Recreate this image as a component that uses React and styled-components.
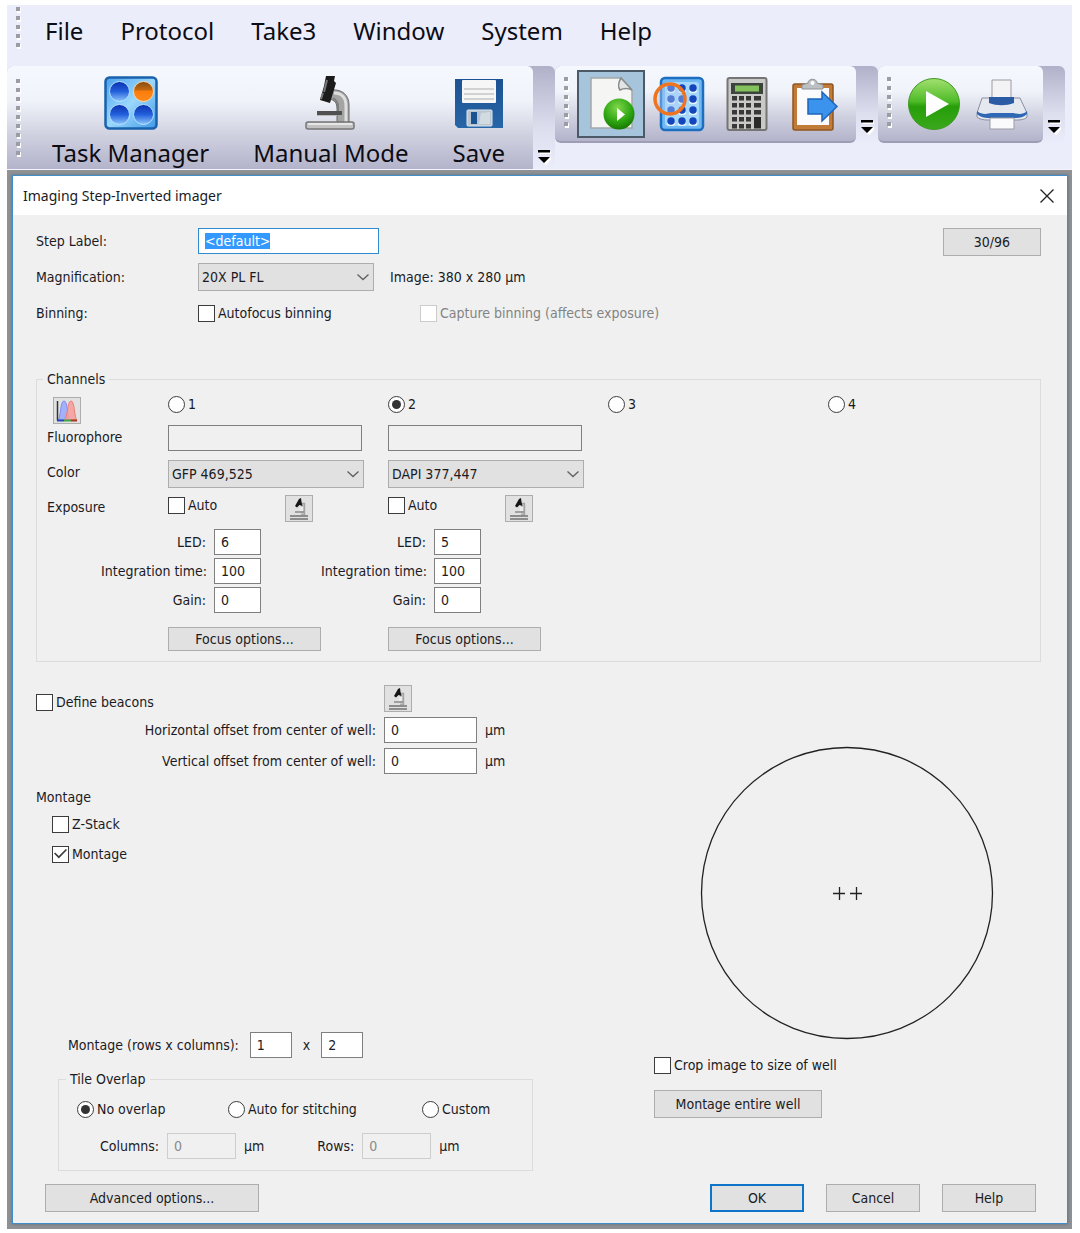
import React, { useEffect, useRef } from "react";
import styled, { createGlobalStyle, css } from "styled-components";

const dialogFont = '"DejaVu Sans Condensed", "DejaVu Sans", sans-serif';
const shellFont = '"Noto Sans", "Open Sans", sans-serif';

const GlobalStyle = createGlobalStyle`
  *, *::before, *::after { box-sizing: border-box; }
  body { margin: 0; background: #fff; }
  button, input, select { font: inherit; color: inherit; margin: 0; border-radius: 0; }
  ::selection { background: #3399ff; color: #fff; }
`;

/* ---------- application shell ---------- */

const Shell = styled.div`
  margin: 5px 8px 4px 7px;
  background: #ebedfb;
  font: 24px/32px ${shellFont};
  color: #0c0c14;
`;

const MenuBar = styled.nav`
  display: flex;
  align-items: center;
  height: 61px;
  padding: 2px 9px 12px;
`;

const MenuList = styled.ul`
  display: flex;
  gap: 37px;
  margin: 0;
  padding: 0 0 0 24px;
  list-style: none;
`;

const MenuLink = styled.a`
  color: inherit;
  text-decoration: none;
`;

const Grip = styled.span`
  flex: none;
  align-self: flex-start;
  width: 5px;
  height: ${(p) => p.$dots * 9}px;
  background: linear-gradient(#9c9ca6 0 4px, transparent 4px) 0 0 / 4px 9px repeat-y,
    linear-gradient(#fff 0 5px, transparent 5px) 1px 1px / 4px 9px repeat-y;
`;

const ToolbarStrip = styled.div`
  display: flex;
  align-items: flex-start;
  height: 103px;
`;

const Group = styled.div`
  display: flex;
  width: ${(p) => p.$width}px;
  height: ${(p) => (p.$tall ? 103 : 77)}px;
  border-radius: 6px;
  background: linear-gradient(#b0b1c9, #dcdeee 60%, #ebedfb);
`;

const Tools = styled.div`
  flex: 1;
  display: flex;
  align-items: flex-start;
  padding: ${(p) => (p.$tall ? "10px 0 0 9px" : "4px 0 0 9px")};
  border-radius: ${(p) => (p.$tall ? "6px 6px 0 0" : "6px")};
  border-bottom: ${(p) => (p.$tall ? 0 : 2)}px solid #9d9db5;
  background: linear-gradient(#f5f8fd 0, #f0f3fa 34%, #cfd0df 68%, #b3b3cb 100%);

  > ${Grip} {
    margin-top: ${(p) => (p.$tall ? 3 : 7)}px;
    margin-right: ${(p) => (p.$tall ? 31 : 8)}px;
  }
`;

const ToolList = styled.div`
  display: flex;
  gap: ${(p) => p.$gap}px;
`;

const BigTool = styled.button`
  display: flex;
  flex-direction: column;
  align-items: center;
  gap: 7px;
  padding: 0;
  border: 0;
  background: none;
  white-space: nowrap;
`;

const IconTool = styled.button`
  display: grid;
  place-items: center;
  width: 68px;
  height: 68px;
  padding: 0;
  border: 2px solid ${(p) => (p.$active ? "#4b5a66" : "transparent")};
  background: ${(p) => (p.$active ? "#a6c4dc" : "none")};
`;

const Overflow = styled.button`
  display: flex;
  align-items: flex-end;
  justify-content: center;
  width: 22px;
  padding: 0 0 ${(p) => (p.$tall ? 4 : 8)}px;
  border: 0;
  background: none;
`;

/* ---------- dialog ---------- */

const Workspace = styled.main`
  padding: 5px 4px 5px 5px;
  border-top: 1px solid #f4f5fc;
  background: #8f9194;
`;

const Dialog = styled.section`
  border: 1px solid #3f8dc9;
  background: #f0f0f0;
  box-shadow: 0 0 3px #5c6f80;
  font: 14px/18px ${dialogFont};
  color: #1b1b1f;
`;

const TitleBar = styled.header`
  display: flex;
  align-items: center;
  justify-content: space-between;
  height: 39px;
  padding: 0 10px;
  background: #fff;
  font-family: ${shellFont};
`;

const Title = styled.h1`
  margin: 0;
  font-size: 14px;
  font-weight: 400;
`;

const CloseButton = styled.button`
  display: grid;
  place-items: center;
  width: 20px;
  height: 20px;
  padding: 0;
  border: 0;
  background: none;
`;

const Body = styled.form`
  display: flex;
  flex-direction: column;
  padding: 13px 26px 11px 23px;
`;

const FormHead = styled.div`
  display: flex;
  justify-content: space-between;
  align-items: flex-start;
`;

const Settings = styled.div`
  display: grid;
  grid-template-columns: 162px 222px auto;
  grid-template-rows: 26px 28px 26px;
  row-gap: 9px;
  align-items: center;
`;

const RowLabel = styled.label`
  grid-column: 1;
`;

const Inline = styled.div`
  grid-column: 2 / span 2;
  display: flex;
  align-items: center;
  gap: 16px;
`;

const TextInput = styled.input`
  width: ${(p) => p.$width}px;
  height: 26px;
  padding: 0 6px;
  border: 1px solid ${(p) => (p.$accent ? "#2f8ad0" : "#7f7f7f")};
  background: ${(p) => (p.$plain ? "#f0f0f0" : "#fff")};
  outline: 0;

  &:disabled {
    border: 1px solid #cdcdcd;
    background: #f0f0f0;
    color: #8a8a8a;
  }
`;

const SelectBox = styled.span`
  display: inline-grid;
  align-items: center;
  width: ${(p) => p.$width}px;
  height: 28px;

  > * {
    grid-area: 1 / 1;
  }
  > svg {
    justify-self: end;
    margin-right: 4px;
    pointer-events: none;
  }
`;

const NativeSelect = styled.select`
  appearance: none;
  width: 100%;
  height: 28px;
  padding: 0 20px 0 3px;
  border: 1px solid #adadad;
  background: #e1e1e1;
`;

const PushButton = styled.button`
  width: ${(p) => p.$width}px;
  height: ${(p) => p.$height || 28}px;
  padding: 0;
  border: ${(p) => (p.$primary ? "2px solid #0f75c8" : "1px solid #adadad")};
  background: #e1e1e1;
  white-space: nowrap;
`;

const GlyphButton = styled.button`
  display: grid;
  place-items: center;
  width: 28px;
  height: 27px;
  padding: 0;
  border: 1px solid #adadad;
  background: #e1e1e1;
`;

const Choice = styled.label`
  display: inline-flex;
  align-items: center;
  gap: 3px;
  height: 20px;
  white-space: nowrap;
  color: ${(p) => (p.$disabled ? "#838383" : "inherit")};
`;

const boxInput = css`
  appearance: none;
  flex: none;
  display: grid;
  place-items: center;
  width: 17px;
  height: 17px;
  border: 1px solid #3c3c3c;
  background: #fff;

  &:disabled {
    border-color: #cccccc;
  }
`;

const Tick = styled.input.attrs({ type: "checkbox" })`
  ${boxInput}

  &:checked::before {
    content: "";
    width: 13px;
    height: 10px;
    background: #3c3c3c;
    clip-path: polygon(0 46%, 9% 36%, 37% 70%, 91% 0, 100% 10%, 37% 94%);
  }
`;

const Dot = styled.input.attrs({ type: "radio" })`
  ${boxInput}
  && {
    border-radius: 50%;
  }

  &:checked::before {
    content: "";
    width: 9px;
    height: 9px;
    border-radius: 50%;
    background: #333;
  }
`;

const FieldSet = styled.fieldset`
  min-width: 0;
  margin: 0;
  padding: 0;
  border: 1px solid #dcdcdc;
`;

const Legend = styled.legend`
  margin-left: ${(p) => p.$indent}px;
  padding: 0 4px;
`;

const ChannelsSet = styled(FieldSet)`
  margin-top: 44px;
  padding: 6px 0 10px 10px;
`;

const ChannelGrid = styled.div`
  display: grid;
  grid-template-columns: 54px repeat(4, 67px 153px);
  grid-template-rows: 31px 35px 35px 34px 98px 24px;
  align-items: start;
`;

const RowHeading = styled.span`
  grid-column: 1 / span 2;
  grid-row: ${(p) => p.$row};
  line-height: 24px;
`;

const SpectrumCell = styled.div`
  grid-area: 1 / 1 / 2 / 3;
  padding: 3px 0 0 6px;
`;

const ChannelCell = styled.div`
  grid-row: ${(p) => p.$row};
  grid-column: ${(p) => 3 + 2 * p.$channel} / span 2;
  display: flex;
  gap: 68px;
`;

const ParamCell = styled.div`
  grid-row: 5;
  grid-column: ${(p) => 2 + 2 * p.$channel} / span 2;
  display: grid;
  grid-template-columns: 105px 47px;
  column-gap: 8px;
  row-gap: 3px;
  align-items: center;
`;

const EndLabel = styled.label`
  width: ${(p) => (p.$width ? `${p.$width}px` : "auto")};
  text-align: right;
  white-space: nowrap;
`;

const Lower = styled.div`
  display: grid;
  grid-template-columns: 618px 1fr;
  align-items: start;
  margin-top: 23px;
`;

const Beacons = styled.div`
  display: grid;
  grid-template-columns: 340px 93px auto;
  gap: 5px 8px;
  align-items: center;

  > ${Choice} {
    align-self: end;
  }
`;

const MontageList = styled.div`
  display: flex;
  flex-direction: column;
  align-items: flex-start;
  gap: 10px;
  margin-top: 14px;
  padding-left: 16px;
`;

const SubHeading = styled.h2`
  margin: 0 0 -2px -16px;
  font-size: 14px;
  font-weight: 400;
`;

const TileRow = styled.div`
  display: flex;
  align-items: center;
  gap: 11px;
  margin: 168px 0 12px;
  padding-left: 32px;
`;

const TileSet = styled(FieldSet)`
  width: 475px;
  margin-left: 22px;
  padding: 11px 18px 11px;
`;

const TileChoices = styled.div`
  display: grid;
  grid-template-columns: 151px 194px auto;
  margin-bottom: 14px;
`;

const TileFields = styled.div`
  display: flex;
  align-items: center;
  gap: 8px;
`;

const WellPane = styled.div`
  display: flex;
  flex-direction: column;
  align-items: flex-start;
  gap: 15px;
  padding-top: 61px;
`;

const WellMap = styled.svg`
  display: block;
  margin-left: 46px;
`;

const Footer = styled.footer`
  display: flex;
  justify-content: space-between;
  margin-top: 13px;
  padding: 0 5px 0 9px;
`;

const Actions = styled.div`
  display: flex;
  gap: 22px;
`;

/* ---------- drawings ---------- */

const PlateIcon = () => (
  <svg width="54" height="54" viewBox="0 0 54 54" aria-hidden="true">
    <defs>
      <linearGradient id="plate" x1="0" y1="0" x2="1" y2="1">
        <stop offset="0" stopColor="#4aa0ec" />
        <stop offset=".5" stopColor="#9ad8fd" />
        <stop offset="1" stopColor="#3e97e6" />
      </linearGradient>
      <linearGradient id="well" x1="0" y1="0" x2="0" y2="1">
        <stop offset="0" stopColor="#0a2fae" />
        <stop offset=".5" stopColor="#2360dc" />
        <stop offset="1" stopColor="#8ec6fb" />
      </linearGradient>
      <linearGradient id="wellHot" x1="0" y1="0" x2="0" y2="1">
        <stop offset="0" stopColor="#7d4c14" />
        <stop offset=".4" stopColor="#c1660f" />
        <stop offset=".5" stopColor="#fb7d0c" />
        <stop offset="1" stopColor="#ff8a1c" />
      </linearGradient>
    </defs>
    <rect x="1.5" y="1.5" width="51" height="51" rx="4" fill="url(#plate)" stroke="#1a61ac" strokeWidth="2.5" />
    <circle cx="15.5" cy="15.5" r="10" fill="url(#well)" stroke="#b7e2ff" />
    <circle cx="39.5" cy="15.5" r="10" fill="url(#wellHot)" stroke="#ffd7a8" />
    <circle cx="15.5" cy="38.5" r="10" fill="url(#well)" stroke="#b7e2ff" />
    <circle cx="39.5" cy="38.5" r="10" fill="url(#well)" stroke="#b7e2ff" />
  </svg>
);

const MicroscopeIcon = () => (
  <svg width="54" height="54" viewBox="0 0 54 54" aria-hidden="true">
    <path d="M28 14c10-1 17 5 17 15v17H33V33c0-6-2-9-8-10z" fill="#a4a4a4" stroke="#6a6a6a" />
    <path d="M30 17c8 0 12 5 12 13v16" fill="none" stroke="#dedede" strokeWidth="3" />
    <path d="M34 36V30c0-4-2-6-5-8" fill="none" stroke="#7d7d7d" strokeWidth="2" />
    <path d="M22 0h9l-1 5 2 2-6 20-10-3 4-14z" fill="#1b1b1b" />
    <path d="M23 4l-3 12M19 17l-2 6" stroke="#777" strokeWidth="2" />
    <rect x="13" y="35" width="25" height="4" fill="#505050" />
    <rect x="13" y="39" width="20" height="1" fill="#b9b9b9" />
    <rect x="2" y="46" width="48" height="7" rx="2" fill="#c2c2c2" stroke="#777" strokeWidth="1.5" />
    <path d="M4 48h44" stroke="#f2f2f2" strokeWidth="1.5" />
  </svg>
);

const SmallMicroscopeIcon = () => (
  <svg width="20" height="22" viewBox="0 0 20 22" aria-hidden="true">
    <path d="M12 5.500h3.500V17H12" fill="#c6c6c6" stroke="#a2a2a2" strokeWidth="1.400" />
    <path d="M11 9h3v4h-3z" fill="#ededed" />
    <path d="M6 14h9" stroke="#8a8a8a" strokeWidth="1.500" />
    <path d="M1 18h18M1 21h18" stroke="#8d8d8d" strokeWidth="1.800" />
    <path d="M10 1l2-1 .5 4 1 4-3-1L8 9.500 6 8z" fill="#161616" />
  </svg>
);

const SaveIcon = () => (
  <svg width="48" height="54" viewBox="0 0 48 54" aria-hidden="true">
    <defs>
      <linearGradient id="disk" x1="0" y1="0" x2="0" y2="1">
        <stop offset="0" stopColor="#1d5292" />
        <stop offset="1" stopColor="#2766a8" />
      </linearGradient>
    </defs>
    <path d="M0 3h48v49H3l-3-3z" fill="url(#disk)" />
    <rect x="7" y="4" width="34" height="23" rx="1" fill="#f6f6f6" />
    <path d="M9 13h30M9 18h30M9 23h30" stroke="#c6c6c6" strokeWidth="1.5" />
    <rect x="12" y="34" width="25" height="16" rx="1" fill="#b9c6d2" stroke="#dfe7ee" />
    <rect x="16" y="36" width="6" height="12" fill="#1c5292" />
    <path d="M26 37l9-1v12H24z" fill="#d2dbe2" />
  </svg>
);

const PageRunIcon = () => (
  <svg width="50" height="56" viewBox="0 0 50 56" aria-hidden="true">
    <defs>
      <radialGradient id="goSmall" cx=".45" cy=".3" r=".75">
        <stop offset="0" stopColor="#7fd84b" />
        <stop offset=".6" stopColor="#2ea512" />
        <stop offset="1" stopColor="#147000" />
      </radialGradient>
    </defs>
    <path d="M5 2h30l11 12v38H5z" fill="#f5f5f3" stroke="#a3a8a8" strokeWidth="1.500" />
    <path d="M35 2c-3 5-3 9-1 12 4-2 8-2 12 0z" fill="#e2e5e5" stroke="#868c8c" strokeWidth="1.500" />
    <circle cx="33" cy="38" r="15.500" fill="url(#goSmall)" />
    <path d="M31 32l8 6.500-8 6.500z" fill="#fff" />
  </svg>
);

const WellSelectIcon = () => (
  <svg width="54" height="56" viewBox="0 0 54 56" aria-hidden="true">
    <rect x="9" y="2" width="42" height="52" rx="4" fill="#6fb8f4" stroke="#1d6dc0" strokeWidth="2.500" />
    <rect x="13" y="6" width="34" height="44" rx="3" fill="#a5d7fb" />
    {[12, 23, 34, 45].map((y) =>
      [19, 30, 41].map((x) => (
        <g key={`${x}-${y}`}>
          <ellipse cx={x} cy={y + 3} rx="4" ry="2" fill="#e6f6ff" />
          <circle cx={x} cy={y} r="3.700" fill="#1545bd" />
        </g>
      ))
    )}
    <circle cx="18" cy="23" r="15" fill="#b5cff7" fillOpacity=".4" stroke="#ef7420" strokeWidth="3.500" />
  </svg>
);

const CalculatorIcon = () => (
  <svg width="42" height="56" viewBox="0 0 42 56" aria-hidden="true">
    <rect x="1.500" y="2" width="39" height="52" rx="2" fill="#c9c9c7" stroke="#757575" strokeWidth="2" />
    <rect x="5" y="7" width="32" height="11" fill="#3d443c" />
    <rect x="9" y="9.500" width="24" height="6" fill="#83c25c" />
    {[20, 27, 34, 41, 48].map((y) =>
      [6, 13, 20, 28].map((x) => (
        <rect key={`${x}-${y}`} x={x} y={y} width={x === 28 ? 7 : 5} height="4.500" fill="#383838" />
      ))
    )}
    <rect x="28" y="41" width="7" height="11" fill="#2b2b2b" />
  </svg>
);

const ClipboardIcon = () => (
  <svg width="48" height="56" viewBox="0 0 48 56" aria-hidden="true">
    <rect x="2" y="8" width="40" height="46" rx="2" fill="#c17a38" stroke="#8f5520" strokeWidth="1.500" />
    <rect x="6" y="12" width="32" height="37" fill="#fbfbfd" />
    <path d="M11 13v-4l6-2c0-5 9-5 9 0l6 2v4z" fill="#bdc0c3" stroke="#8e9296" />
    <circle cx="21.500" cy="7" r="2" fill="#fff" />
    <path d="M17 23h14v-7l15 14.500L31 45v-7H17z" fill="#3b93ee" stroke="#1d66bb" strokeWidth="1.500" />
  </svg>
);

const PlayIcon = () => (
  <svg width="54" height="56" viewBox="0 0 54 56" aria-hidden="true">
    <defs>
      <linearGradient id="go" x1="0" y1="0" x2="0" y2="1">
        <stop offset="0" stopColor="#a3e070" />
        <stop offset=".45" stopColor="#4ebb27" />
        <stop offset=".55" stopColor="#279e0a" />
        <stop offset="1" stopColor="#3aa81c" />
      </linearGradient>
    </defs>
    <circle cx="27" cy="28" r="25.500" fill="url(#go)" stroke="#3f9a22" />
    <path d="M19 15l23 13-23 13z" fill="#fff" />
  </svg>
);

const PrinterIcon = () => (
  <svg width="54" height="56" viewBox="0 0 54 56" aria-hidden="true">
    <path d="M17 4h19v20H17z" fill="#f3f3f5" stroke="#9b9ba4" />
    <path d="M7 22h38l7 15v4c-2 3-8 3-12 3H13c-5 0-9-1-11-3v-4z" fill="#e6e8ef" stroke="#8b8fa0" />
    <path d="M14 21h25v6c-8 3-17 3-25 0z" fill="#2a5ba4" />
    <path d="M2 35c5 4 10 3 14 2h22c5 1 10 2 14-2v3c-4 4-9 4-14 4H16c-5 0-10 0-14-4z" fill="#2f68b4" />
    <path d="M15 42h24v11H15z" fill="#fafafc" stroke="#9b9ba4" />
  </svg>
);

const SpectrumIcon = () => (
  <svg width="22" height="22" viewBox="0 0 22 22" aria-hidden="true">
    <path d="M2 20C5 18 4 1 8 1s3 17 6 19z" fill="#a3b1f8" stroke="#7f8ef0" />
    <path d="M8 20c4-2 3-19 7-19s3 17 6 19z" fill="#f89c98" fillOpacity=".85" stroke="#f07b78" />
    <path d="M1.500 1v19.500" stroke="#333" strokeWidth="1.500" />
    <path d="M1 20.500h7" stroke="#2748b8" strokeWidth="2" />
    <path d="M8 20.500h7" stroke="#3fa543" strokeWidth="2" />
    <path d="M15 20.500h6" stroke="#a93624" strokeWidth="2" />
  </svg>
);

const Chevron = () => (
  <svg width="14" height="8" viewBox="0 0 14 8" aria-hidden="true">
    <path d="M1.500 1.500L7 6.500l5.500-5" fill="none" stroke="#606060" strokeWidth="1.300" />
  </svg>
);

const OverflowIcon = () => (
  <svg width="13" height="16" viewBox="0 0 13 16" aria-hidden="true">
    <path d="M2 4h11M3 9h10l-5 6z" fill="#fff" stroke="#fff" strokeWidth="2" />
    <path d="M0 1h12v2.500H0zM0 8h12l-6 6z" fill="#000" />
  </svg>
);

const CloseIcon = () => (
  <svg width="14" height="14" viewBox="0 0 14 14" aria-hidden="true">
    <path d="M.5.5l13 13M13.500.5l-13 13" stroke="#222" strokeWidth="1.300" />
  </svg>
);

/* ---------- composed parts ---------- */

const ColorSelect = ({ label, value, width, id }) => (
  <SelectBox $width={width}>
    <NativeSelect id={id} aria-label={label} defaultValue={value}>
      <option>{value}</option>
    </NativeSelect>
    <Chevron />
  </SelectBox>
);

const Check = ({ children, disabled, ...rest }) => (
  <Choice $disabled={disabled}>
    <Tick disabled={disabled} {...rest} />
    {children}
  </Choice>
);

const Radio = ({ children, ...rest }) => (
  <Choice>
    <Dot {...rest} />
    {children}
  </Choice>
);

const channels = [
  { color: "GFP 469,525", led: 6, time: 100, gain: 0 },
  { color: "DAPI 377,447", led: 5, time: 100, gain: 0 },
  null,
  null,
];

const Channel = ({ index, data }) => {
  const n = index + 1;
  return (
    <>
      <ChannelCell $row={1} $channel={index}>
        <Radio name="channel" defaultChecked={n === 2}>{n}</Radio>
      </ChannelCell>
      {data && (
        <>
          <ChannelCell $row={2} $channel={index}>
            <TextInput $width={194} $plain readOnly aria-label={`Fluorophore ${n}`} />
          </ChannelCell>
          <ChannelCell $row={3} $channel={index}>
            <ColorSelect width={196} value={data.color} label={`Color ${n}`} />
          </ChannelCell>
          <ChannelCell $row={4} $channel={index}>
            <Check>Auto</Check>
            <GlyphButton type="button" aria-label={`Auto expose channel ${n}`}>
              <SmallMicroscopeIcon />
            </GlyphButton>
          </ChannelCell>
          <ParamCell $channel={index}>
            <EndLabel htmlFor={`led${n}`}>LED:</EndLabel>
            <TextInput id={`led${n}`} $width={47} defaultValue={data.led} />
            <EndLabel htmlFor={`time${n}`}>Integration time:</EndLabel>
            <TextInput id={`time${n}`} $width={47} defaultValue={data.time} />
            <EndLabel htmlFor={`gain${n}`}>Gain:</EndLabel>
            <TextInput id={`gain${n}`} $width={47} defaultValue={data.gain} />
          </ParamCell>
          <ChannelCell $row={6} $channel={index}>
            <PushButton type="button" $width={153} $height={24}>Focus options...</PushButton>
          </ChannelCell>
        </>
      )}
    </>
  );
};

const Toolbar = () => (
  <ToolbarStrip>
    <Group $width={548} $tall>
      <Tools $tall>
        <Grip $dots={9} />
        <ToolList $gap={44}>
          <BigTool type="button"><PlateIcon />Task Manager</BigTool>
          <BigTool type="button"><MicroscopeIcon />Manual Mode</BigTool>
          <BigTool type="button"><SaveIcon />Save</BigTool>
        </ToolList>
      </Tools>
      <Overflow type="button" $tall aria-label="More tools"><OverflowIcon /></Overflow>
    </Group>
    <Group $width={323}>
      <Tools>
        <Grip $dots={6} />
        <ToolList $gap={0}>
          <IconTool type="button" $active aria-label="New experiment"><PageRunIcon /></IconTool>
          <IconTool type="button" aria-label="Select wells"><WellSelectIcon /></IconTool>
          <IconTool type="button" aria-label="Calculator"><CalculatorIcon /></IconTool>
          <IconTool type="button" aria-label="Export"><ClipboardIcon /></IconTool>
        </ToolList>
      </Tools>
      <Overflow type="button" aria-label="More plate tools"><OverflowIcon /></Overflow>
    </Group>
    <Group $width={187}>
      <Tools>
        <Grip $dots={6} />
        <ToolList $gap={0}>
          <IconTool type="button" aria-label="Run"><PlayIcon /></IconTool>
          <IconTool type="button" aria-label="Print"><PrinterIcon /></IconTool>
        </ToolList>
      </Tools>
      <Overflow type="button" aria-label="More run tools"><OverflowIcon /></Overflow>
    </Group>
  </ToolbarStrip>
);

export default function App() {
  const stepLabel = useRef(null);

  useEffect(() => {
    stepLabel.current.focus();
    stepLabel.current.select();
  }, []);

  return (
    <>
      <GlobalStyle />
      <Shell>
        <MenuBar>
          <Grip $dots={5} />
          <MenuList>
            {["File", "Protocol", "Take3", "Window", "System", "Help"].map((item) => (
              <li key={item}><MenuLink href="#">{item}</MenuLink></li>
            ))}
          </MenuList>
        </MenuBar>
        <Toolbar />
        <Workspace>
          <Dialog role="dialog" aria-labelledby="dialog-title">
            <TitleBar>
              <Title id="dialog-title">Imaging Step-Inverted imager</Title>
              <CloseButton type="button" aria-label="Close"><CloseIcon /></CloseButton>
            </TitleBar>
            <Body onSubmit={(e) => e.preventDefault()}>
              <FormHead>
                <Settings>
                  <RowLabel htmlFor="step">Step Label:</RowLabel>
                  <Inline>
                    <TextInput id="step" ref={stepLabel} $width={181} $accent defaultValue="<default>" />
                  </Inline>
                  <RowLabel htmlFor="mag">Magnification:</RowLabel>
                  <Inline>
                    <ColorSelect id="mag" width={176} value="20X PL FL" />
                    <span>Image: 380 x 280 µm</span>
                  </Inline>
                  <RowLabel as="span">Binning:</RowLabel>
                  <Check>Autofocus binning</Check>
                  <Check disabled>Capture binning (affects exposure)</Check>
                </Settings>
                <PushButton type="button" $width={98}>30/96</PushButton>
              </FormHead>

              <ChannelsSet>
                <Legend $indent={-4}>Channels</Legend>
                <ChannelGrid>
                  <SpectrumCell>
                    <GlyphButton type="button" aria-label="Spectra"><SpectrumIcon /></GlyphButton>
                  </SpectrumCell>
                  <RowHeading $row={2}>Fluorophore</RowHeading>
                  <RowHeading $row={3}>Color</RowHeading>
                  <RowHeading $row={4}>Exposure</RowHeading>
                  {channels.map((data, i) => (
                    <Channel key={i} index={i} data={data} />
                  ))}
                </ChannelGrid>
              </ChannelsSet>

              <Lower>
                <div>
                  <Beacons>
                    <Check>Define beacons</Check>
                    <GlyphButton type="button" aria-label="Define beacon position">
                      <SmallMicroscopeIcon />
                    </GlyphButton>
                    <span />
                    <EndLabel htmlFor="hoff">Horizontal offset from center of well:</EndLabel>
                    <TextInput id="hoff" $width={93} defaultValue="0" />
                    <span>µm</span>
                    <EndLabel htmlFor="voff">Vertical offset from center of well:</EndLabel>
                    <TextInput id="voff" $width={93} defaultValue="0" />
                    <span>µm</span>
                  </Beacons>
                  <MontageList>
                    <SubHeading>Montage</SubHeading>
                    <Check>Z-Stack</Check>
                    <Check defaultChecked>Montage</Check>
                  </MontageList>
                  <TileRow>
                    <label htmlFor="rows">Montage (rows x columns):</label>
                    <TextInput id="rows" $width={42} defaultValue="1" />
                    <label htmlFor="cols">x</label>
                    <TextInput id="cols" $width={42} defaultValue="2" />
                  </TileRow>
                  <TileSet>
                    <Legend $indent={-11}>Tile Overlap</Legend>
                    <TileChoices>
                      <Radio name="overlap" defaultChecked>No overlap</Radio>
                      <Radio name="overlap">Auto for stitching</Radio>
                      <Radio name="overlap">Custom</Radio>
                    </TileChoices>
                    <TileFields>
                      <EndLabel $width={82} htmlFor="ovc">Columns:</EndLabel>
                      <TextInput id="ovc" $width={69} disabled defaultValue="0" />
                      <span>µm</span>
                      <EndLabel $width={82} htmlFor="ovr">Rows:</EndLabel>
                      <TextInput id="ovr" $width={69} disabled defaultValue="0" />
                      <span>µm</span>
                    </TileFields>
                  </TileSet>
                </div>
                <WellPane>
                  <WellMap width="294" height="294" viewBox="0 0 294 294" role="img" aria-label="Well map">
                    <circle cx="147" cy="147" r="145.500" fill="none" stroke="#222" strokeWidth="1.300" />
                    <path d="M133 147.500h12M139.500 141v13M150 147.500h12M156.500 141v13" stroke="#222" strokeWidth="1.300" />
                  </WellMap>
                  <Check>Crop image to size of well</Check>
                  <PushButton type="button" $width={168}>Montage entire well</PushButton>
                </WellPane>
              </Lower>

              <Footer>
                <PushButton type="button" $width={214}>Advanced options...</PushButton>
                <Actions>
                  <PushButton type="submit" $width={94} $primary>OK</PushButton>
                  <PushButton type="button" $width={94}>Cancel</PushButton>
                  <PushButton type="button" $width={94}>Help</PushButton>
                </Actions>
              </Footer>
            </Body>
          </Dialog>
        </Workspace>
      </Shell>
    </>
  );
}
